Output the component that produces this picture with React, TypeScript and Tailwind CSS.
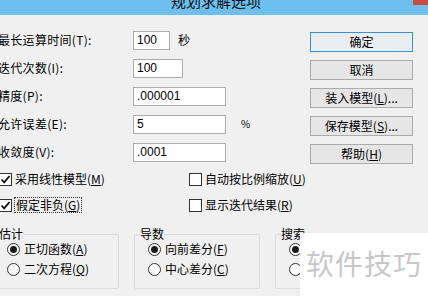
const rows = [
  { label: "最长运算时间(T):", value: "100", w: "w-[37px]", suffix: "秒" },
  { label: "迭代次数(I):", value: "100", w: "w-[50px]" },
  { label: "精度(P):", value: ".000001", w: "w-[93px]" },
  { label: "允许误差(E):", value: "5", w: "w-[93px]", suffix: "%" },
  { label: "收敛度(V):", value: ".0001", w: "w-[93px]" },
];

const Key = ({ k }: { k: string }) => (
  <>
    (<span className="underline underline-offset-[1px]">{k}</span>)
  </>
);

const Check = ({ checked }: { checked?: boolean }) => (
  <span className="w-[13px] h-[13px] border border-[#333] bg-white flex items-center justify-center shrink-0">
    {checked && (
      <svg width="11" height="11" viewBox="0 0 11 11">
        <path d="M1.5 5.5 L4.2 8.3 L9.5 2" fill="none" stroke="#111" strokeWidth="1.8" />
      </svg>
    )}
  </span>
);

const Radio = ({ on }: { on?: boolean }) => (
  <span className="w-[13px] h-[13px] rounded-full border border-[#333] bg-white flex items-center justify-center shrink-0">
    {on && <span className="w-[7px] h-[7px] rounded-full bg-[#1a1a1a]" />}
  </span>
);

const Group = ({ title, items }: { title: string; items: [string, string, boolean][] }) => (
  <div className="relative w-[126px] h-[55px] border border-[#dcdcdc] rounded-[2px] pt-[4px] pl-[13px] shrink-0">
    <span className="absolute left-[5px] -top-[9px] bg-[#f0f0f0] leading-[16px]">{title}</span>
    {items.map(([t, k, on], i) => (
      <div key={i} className="flex items-center h-[20px] gap-[4px]">
        <Radio on={on} />
        {t && (
          <span>
            {t}
            <Key k={k} />
          </span>
        )}
      </div>
    ))}
  </div>
);

export default function App() {
  return (
    <div className="relative w-[428px] h-[296px] overflow-hidden bg-[#f0f0f0] text-[12px] leading-none text-black font-['Noto_Sans_CJK_SC',sans-serif]">
      <div className="relative h-[15px] bg-[#6cbfef] overflow-hidden flex justify-center pl-[4px]">
        <span className="text-[15px] leading-[15px] -mt-[7px] text-[#111]">规划求解选项</span>
        <span className="absolute right-0 top-0 w-[15px] h-[5px] bg-[#c94b44]" />
      </div>

      <div className="flex h-[151px]">
        <div className="w-[312px] pt-[11px] -ml-[2px]">
          {rows.map((r) => (
            <div key={r.label} className="flex items-center h-[28px]">
              <span className="w-[135px] tracking-[0.3px]">{r.label}</span>
              <span className={`${r.w} h-[19px] border border-[#abadb3] bg-white flex items-center pl-[3px] font-['Liberation_Sans',sans-serif]`}>
                {r.value}
              </span>
              {r.suffix && (
                <span className={r.suffix === "%" ? "ml-[15px] text-[10px]" : "ml-[8px]"}>{r.suffix}</span>
              )}
            </div>
          ))}
        </div>
        <div className="w-[103px] pt-[17px] flex flex-col gap-[8px]">
          <button className="h-[20px] border border-[#3c8fcf] bg-[#e9eef2]">确定</button>
          <button className="h-[20px] border border-[#acacac] bg-[#e6e6e6]">取消</button>
          <button className="h-[20px] border border-[#acacac] bg-[#e6e6e6]">
            装入模型<Key k="L" />...
          </button>
          <button className="h-[20px] border border-[#acacac] bg-[#e6e6e6]">
            保存模型<Key k="S" />...
          </button>
          <button className="h-[20px] border border-[#acacac] bg-[#e6e6e6]">
            帮助<Key k="H" />
          </button>
        </div>
      </div>

      <div className="grid grid-cols-[190px_1fr] -ml-[1px]">
        <div className="flex items-center h-[26px] gap-[3px]">
          <Check checked />
          <span>
            采用线性模型<Key k="M" />
          </span>
        </div>
        <div className="flex items-center h-[26px] gap-[3px]">
          <Check />
          <span>
            自动按比例缩放<Key k="U" />
          </span>
        </div>
        <div className="flex items-center h-[26px] gap-[2px]">
          <Check checked />
          <span className="border border-dotted border-[#333] px-[1px] py-[1px]">
            假定非负<Key k="G" />
          </span>
        </div>
        <div className="flex items-center h-[26px] gap-[3px]">
          <Check />
          <span>
            显示迭代结果<Key k="R" />
          </span>
        </div>
      </div>

      <div className="flex gap-[15px] mt-[16px] -ml-[7px]">
        <Group title="估计" items={[["正切函数", "A", true], ["二次方程", "Q", false]]} />
        <Group title="导数" items={[["向前差分", "F", true], ["中心差分", "C", false]]} />
        <Group title="搜索" items={[["", "", true], ["", "", false]]} />
      </div>

      <div className="absolute left-[300px] top-[233px] right-0 bottom-0 bg-white pl-[6px] pt-[16px]">
        <span className="text-[28px] leading-[28px] tracking-[1px] text-[#c8c8c8]">软件技巧</span>
      </div>
    </div>
  );
}
